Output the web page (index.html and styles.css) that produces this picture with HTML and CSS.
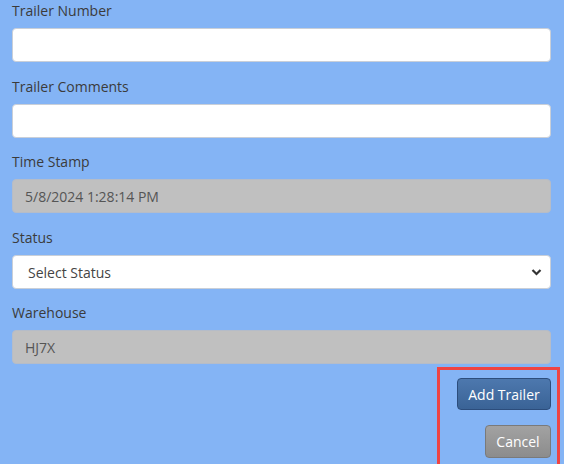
FILE: index.html
```html
<!DOCTYPE html>
<html>
<head>
<meta charset="utf-8">
<link rel="stylesheet" href="styles.css">
</head>
<body>
<form class="form">
  <div class="group">
    <label class="label">Trailer Number</label>
    <input class="control" type="text">
  </div>
  <div class="group">
    <label class="label">Trailer Comments</label>
    <input class="control" type="text">
  </div>
  <div class="group">
    <label class="label">Time Stamp</label>
    <input class="control control-disabled" type="text" value="5/8/2024 1:28:14 PM" disabled>
  </div>
  <div class="group">
    <label class="label">Status</label>
    <div class="select">
      <span class="select-text">Select Status</span>
      <svg class="chevron" width="11" height="8" viewBox="0 0 11 8"><path d="M1.5 2 L5.5 6 L9.5 2" fill="none" stroke="#333" stroke-width="2.2"/></svg>
    </div>
  </div>
  <div class="group">
    <label class="label">Warehouse</label>
    <input class="control control-disabled" type="text" value="HJ7X" disabled>
  </div>
  <div class="actions">
    <button type="button" class="btn btn-primary">Add Trailer</button>
    <button type="button" class="btn btn-secondary">Cancel</button>
  </div>
</form>
</body>
</html>
```
FILE: styles.css
```css
html, body {
  margin: 0;
  padding: 0;
  background: #84b4f5;
  height: 100%;
  overflow: hidden;
}
body {
  font-family: "Open Sans", "DejaVu Sans", sans-serif;
  font-size: 14px;
  color: #3a3a3a;
}
.form {
  padding: 1px 13px 0 12px;
}
.group {
  display: flex;
  flex-direction: column;
  margin-bottom: 15px;
}
.group:nth-child(even) {
  margin-bottom: 14px;
}
.label {
  line-height: 20px;
  margin-bottom: 7px;
  color: #3b3b3b;
}
.control {
  box-sizing: border-box;
  height: 34px;
  width: 100%;
  border: 1px solid #c9cfd8;
  border-radius: 4px;
  background: #fff;
  padding: 0 12px;
  font-family: "Open Sans", "DejaVu Sans", sans-serif;
  font-size: 14px;
  color: #4a4a4a;
  outline: none;
  margin: 0;
}
.control-disabled {
  background: #c0c0c0;
  border-color: #b5bcc8;
  color: #555;
  -webkit-text-fill-color: #555;
  opacity: 1;
}
.select {
  box-sizing: border-box;
  height: 34px;
  border: 1px solid #c9cfd8;
  border-radius: 4px;
  background: #fff;
  display: flex;
  align-items: center;
  justify-content: space-between;
  padding: 0 8px 0 15px;
  color: #444;
}
.chevron {
  display: block;
}
.actions {
  display: flex;
  flex-direction: column;
  align-items: flex-end;
  gap: 15px;
  width: 123px;
  box-sizing: border-box;
  margin: -12px -9px 0 auto;
  border: 3px solid #ee4444;
  border-bottom: none;
  padding: 8px 6px 10px 0;
}
.btn {
  font-family: "Open Sans", "DejaVu Sans", sans-serif;
  font-size: 14px;
  color: #fff;
  border-radius: 4px;
  padding: 0 10px;
  margin: 0;
  cursor: pointer;
}
.btn-primary {
  height: 32px;
  width: 94px;
  background: linear-gradient(#4d78ae, #3a6396);
  border: 1px solid #2c4d7c;
}
.btn-secondary {
  height: 33px;
  width: 66px;
  background: linear-gradient(#a2a2a2, #8c8c8c);
  border: 1px solid #7a7a7a;
}
```
